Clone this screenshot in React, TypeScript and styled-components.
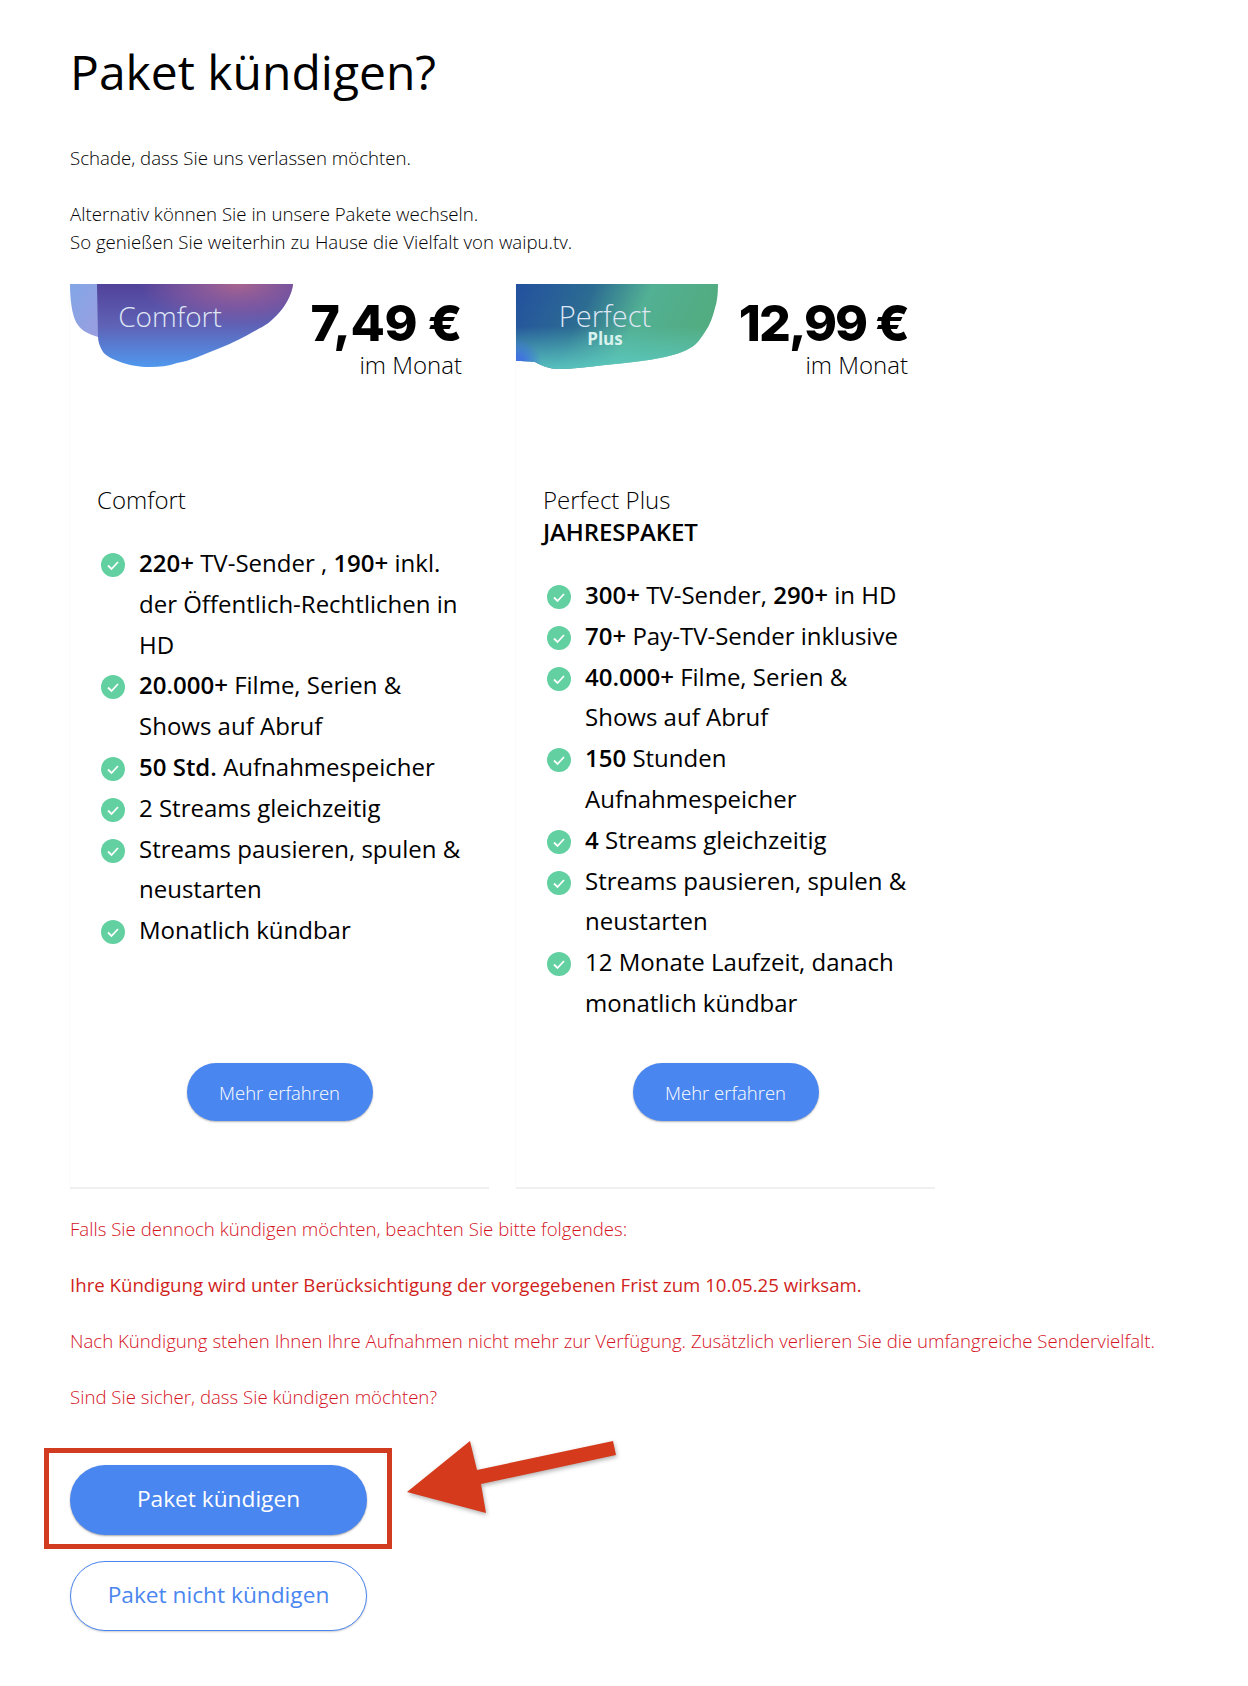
import React from 'react';
import styled, { createGlobalStyle } from 'styled-components';

const GlobalStyle = createGlobalStyle`
  html, body {
    margin: 0;
    padding: 0;
    background: #fff;
  }
  body {
    font-family: "Open Sans", "Liberation Sans", sans-serif;
    color: #000;
  }
`;

const Page = styled.div`
  width: 1248px;
  min-height: 1686px;
  box-sizing: border-box;
  padding: 39px 0 0 70px;
`;

const Title = styled.h1`
  font-weight: 400;
  font-size: 48px;
  line-height: 66px;
  margin: 0 0 39px;
`;

const TextBlock = styled.div`
  display: flex;
  flex-direction: column;
  gap: 28px;
`;

const Text = styled.p<{ $red?: boolean; $strong?: boolean }>`
  margin: 0;
  font-size: 18.65px;
  line-height: 28px;
  font-weight: ${(p) => (p.$strong ? 400 : 300)};
  color: ${(p) => (p.$strong ? '#d01f1c' : p.$red ? '#d5141f' : '#000')};
  white-space: nowrap;
`;

const Cards = styled.div`
  display: flex;
  gap: 27px;
  margin: 28px 0 26px;
`;

const Card = styled.div`
  width: 419px;
  height: 905px;
  display: flex;
  flex-direction: column;
  border-bottom: 2px solid #f0f0f0;
  box-shadow: -1px 0 0 #fbfbfb;
  box-sizing: border-box;
`;

const CardHead = styled.div`
  display: flex;
  justify-content: space-between;
  height: 200px;
  padding-right: 27px;
`;

const Badge = styled.div`
  position: relative;
  height: 85px;
`;

const BadgeName = styled.div<{ $x: number; $size: number }>`
  position: absolute;
  top: 12px;
  left: ${(p) => p.$x}px;
  width: 120px;
  text-align: center;
  color: #dfe6f4;
  font-size: ${(p) => p.$size}px;
  line-height: 40px;
  font-weight: 300;
`;

const BadgeSub = styled.div<{ $x: number }>`
  position: absolute;
  top: 45px;
  left: ${(p) => p.$x}px;
  width: 120px;
  text-align: center;
  color: #d8f2ee;
  font-size: 17px;
  line-height: 20px;
  font-weight: 700;
`;

const PriceBox = styled.div`
  text-align: right;
  padding-top: 13px;
`;

const Price = styled.div<{ $spacing: number }>`
  font-family: Inter, "Liberation Sans", sans-serif;
  font-weight: 800;
  font-size: 50px;
  line-height: 52px;
  letter-spacing: ${(p) => p.$spacing}px;
`;

const PriceNote = styled.div`
  font-size: 24px;
  line-height: 32px;
  font-weight: 300;
`;

const CardBody = styled.div`
  flex: 1;
  display: flex;
  flex-direction: column;
  padding: 0 20px 0 27px;
`;

const PlanName = styled.div`
  font-size: 24px;
  line-height: 32px;
  font-weight: 300;
`;

const PlanTerm = styled.div`
  font-size: 24px;
  line-height: 32px;
  font-weight: 600;
  letter-spacing: -0.1px;
`;

const Features = styled.ul`
  list-style: none;
  margin: 27px 0 0;
  padding: 0;
`;

const Feature = styled.li`
  display: flex;
  gap: 14px;
  padding-left: 4px;
  font-size: 24px;
  line-height: 40.8px;
  b {
    font-weight: 600;
  }
`;

const CheckIcon = styled.svg`
  flex: none;
  width: 24px;
  height: 24px;
  margin-top: 10px;
`;

const MoreButton = styled.button`
  align-self: center;
  margin: auto 0 66px -7px;
  width: 186px;
  height: 58px;
  border: none;
  border-radius: 29px;
  background: #4a86f0;
  box-shadow: 0 1px 2px rgba(0, 0, 0, 0.3);
  color: #fff;
  font-family: inherit;
  font-size: 18.5px;
  font-weight: 300;
`;

const Actions = styled.div`
  position: relative;
  display: flex;
  flex-direction: column;
  gap: 26px;
  width: 297px;
  margin-top: 54px;
`;

const PrimaryButton = styled.button`
  height: 70px;
  padding: 0 0 4px;
  border: none;
  border-radius: 35px;
  background: #4a86f0;
  box-shadow: 0 1px 2px rgba(0, 0, 0, 0.35);
  color: #fff;
  font-family: inherit;
  font-size: 22.7px;
`;

const SecondaryButton = styled.button`
  height: 70px;
  padding: 0 0 4px;
  border: 1px solid #4a86f0;
  border-radius: 35px;
  background: #fff;
  box-shadow: 0 1px 2px rgba(0, 0, 0, 0.2);
  color: #4a86f0;
  font-family: inherit;
  font-size: 22.7px;
`;

const Frame = styled.div`
  position: absolute;
  left: -26px;
  top: -17px;
  width: 348px;
  height: 101px;
  box-sizing: border-box;
  border: 5px solid #d13b20;
`;

const Arrow = styled.svg`
  position: absolute;
  left: 337px;
  top: -24px;
  overflow: visible;
  filter: drop-shadow(1px 2px 2px rgba(0, 0, 0, 0.3));
`;

const Check = () => (
  <CheckIcon viewBox="0 0 24 24">
    <circle cx="12" cy="12" r="12" fill="#62d0a0" />
    <path d="M7 12.5l3.5 3.5L17 9" fill="none" stroke="#fff" strokeWidth="1.8" />
  </CheckIcon>
);

const comfortShape =
  'M27 0H223C222 11 214 24 207 31C200 38 195 42 190 44C176 52 165 58 150 64C135 70 120 77 107 79C98 82 90 83 80 83C68 83 60 81 53 79C44 76 36 72 33 68C30 63 28 58 28 53Z';
const perfectShape =
  'M0 0H202C202 10 201 18 199 24C197 32 194 41 189 48C185 54 181 60 176 63C168 68 158 71 149 73C130 77 110 79 89 81C72 83 56 85 42 85C34 85 26 82 19 78C12 77 6 77 0 77Z';

const ComfortBlob = () => (
  <svg width="223" height="84" viewBox="0 0 223 84">
    <defs>
      <linearGradient id="cBase" x1="0" y1="0" x2="0" y2="1">
        <stop offset="0" stopColor="#51429a" />
        <stop offset="0.5" stopColor="#5f62b6" />
        <stop offset="1" stopColor="#4f98ee" />
      </linearGradient>
      <radialGradient id="cPink" cx="0.72" cy="0" r="0.5">
        <stop offset="0" stopColor="#a8658f" stopOpacity="1" />
        <stop offset="0.55" stopColor="#8b5a9e" stopOpacity="0.7" />
        <stop offset="1" stopColor="#8b5a9e" stopOpacity="0" />
      </radialGradient>
      <linearGradient id="cBack" x1="0" y1="0" x2="1" y2="1">
        <stop offset="0" stopColor="#82a6e6" />
        <stop offset="1" stopColor="#9a9ee0" />
      </linearGradient>
    </defs>
    <path d="M0 0H28V53C18 50 10 46 6 38C2 30 0 16 0 0Z" fill="url(#cBack)" />
    <path d={comfortShape} fill="url(#cBase)" />
    <path d={comfortShape} fill="url(#cPink)" />
  </svg>
);

const PerfectBlob = () => (
  <svg width="202" height="85" viewBox="0 0 202 85">
    <defs>
      <linearGradient id="pBase" x1="0" y1="0" x2="1" y2="0.2">
        <stop offset="0" stopColor="#23509f" />
        <stop offset="0.38" stopColor="#2c6c92" />
        <stop offset="0.65" stopColor="#52b094" />
        <stop offset="1" stopColor="#52ac80" />
      </linearGradient>
      <linearGradient id="pGlow" x1="0" y1="0" x2="0" y2="1">
        <stop offset="0.5" stopColor="#5ccac2" stopOpacity="0" />
        <stop offset="1" stopColor="#5ccac2" stopOpacity="0.9" />
      </linearGradient>
      <radialGradient id="pBlue" gradientUnits="userSpaceOnUse" cx="0" cy="80" r="26">
        <stop offset="0.3" stopColor="#3f70e0" stopOpacity="0.95" />
        <stop offset="1" stopColor="#3f70e0" stopOpacity="0" />
      </radialGradient>
    </defs>
    <path d={perfectShape} fill="url(#pBase)" />
    <path d={perfectShape} fill="url(#pGlow)" />
    <path d={perfectShape} fill="url(#pBlue)" />
  </svg>
);

const App = () => {
  return (
    <Page>
      <GlobalStyle />
      <Title>Paket kündigen?</Title>
      <TextBlock>
        <Text>Schade, dass Sie uns verlassen möchten.</Text>
        <Text>
          Alternativ können Sie in unsere Pakete wechseln.
          <br />
          So genießen Sie weiterhin zu Hause die Vielfalt von waipu.tv.
        </Text>
      </TextBlock>

      <Cards>
        <Card>
          <CardHead>
            <Badge>
              <ComfortBlob />
              <BadgeName $x={40} $size={28}>Comfort</BadgeName>
            </Badge>
            <PriceBox>
              <Price $spacing={-0.4}>7,49 €</Price>
              <PriceNote>im Monat</PriceNote>
            </PriceBox>
          </CardHead>
          <CardBody>
            <PlanName>Comfort</PlanName>
            <Features>
              <Feature>
                <Check />
                <span>
                  <b>220+</b> TV-Sender , <b>190+</b> inkl. der Öffentlich-Rechtlichen in HD
                </span>
              </Feature>
              <Feature>
                <Check />
                <span>
                  <b>20.000+</b> Filme, Serien &amp; Shows auf Abruf
                </span>
              </Feature>
              <Feature>
                <Check />
                <span>
                  <b>50 Std.</b> Aufnahmespeicher
                </span>
              </Feature>
              <Feature>
                <Check />
                <span>2 Streams gleichzeitig</span>
              </Feature>
              <Feature>
                <Check />
                <span>Streams pausieren, spulen &amp; neustarten</span>
              </Feature>
              <Feature>
                <Check />
                <span>Monatlich kündbar</span>
              </Feature>
            </Features>
            <MoreButton>Mehr erfahren</MoreButton>
          </CardBody>
        </Card>

        <Card>
          <CardHead>
            <Badge>
              <PerfectBlob />
              <BadgeName $x={29} $size={29}>Perfect</BadgeName>
              <BadgeSub $x={29}>Plus</BadgeSub>
            </Badge>
            <PriceBox>
              <Price $spacing={-1.9}>12,99 €</Price>
              <PriceNote>im Monat</PriceNote>
            </PriceBox>
          </CardHead>
          <CardBody>
            <PlanName>Perfect Plus</PlanName>
            <PlanTerm>JAHRESPAKET</PlanTerm>
            <Features>
              <Feature>
                <Check />
                <span>
                  <b>300+</b> TV-Sender, <b>290+</b> in HD
                </span>
              </Feature>
              <Feature>
                <Check />
                <span>
                  <b>70+</b> Pay-TV-Sender inklusive
                </span>
              </Feature>
              <Feature>
                <Check />
                <span>
                  <b>40.000+</b> Filme, Serien &amp; Shows auf Abruf
                </span>
              </Feature>
              <Feature>
                <Check />
                <span>
                  <b>150</b> Stunden Aufnahmespeicher
                </span>
              </Feature>
              <Feature>
                <Check />
                <span>
                  <b>4</b> Streams gleichzeitig
                </span>
              </Feature>
              <Feature>
                <Check />
                <span>Streams pausieren, spulen &amp; neustarten</span>
              </Feature>
              <Feature>
                <Check />
                <span>12 Monate Laufzeit, danach monatlich kündbar</span>
              </Feature>
            </Features>
            <MoreButton>Mehr erfahren</MoreButton>
          </CardBody>
        </Card>
      </Cards>

      <TextBlock>
        <Text $red>Falls Sie dennoch kündigen möchten, beachten Sie bitte folgendes:</Text>
        <Text $strong>Ihre Kündigung wird unter Berücksichtigung der vorgegebenen Frist zum 10.05.25 wirksam.</Text>
        <Text $red>
          Nach Kündigung stehen Ihnen Ihre Aufnahmen nicht mehr zur Verfügung. Zusätzlich verlieren Sie die umfangreiche Sendervielfalt.
        </Text>
        <Text $red>Sind Sie sicher, dass Sie kündigen möchten?</Text>
      </TextBlock>

      <Actions>
        <PrimaryButton>Paket kündigen</PrimaryButton>
        <SecondaryButton>Paket nicht kündigen</SecondaryButton>
        <Frame />
        <Arrow width="209" height="72" viewBox="0 0 209 72">
          <path d="M0 51L63 0L70 29L206 0L209 14L74 43L79 72Z" fill="#d43a1b" />
        </Arrow>
      </Actions>
    </Page>
  );
};

export default App;
